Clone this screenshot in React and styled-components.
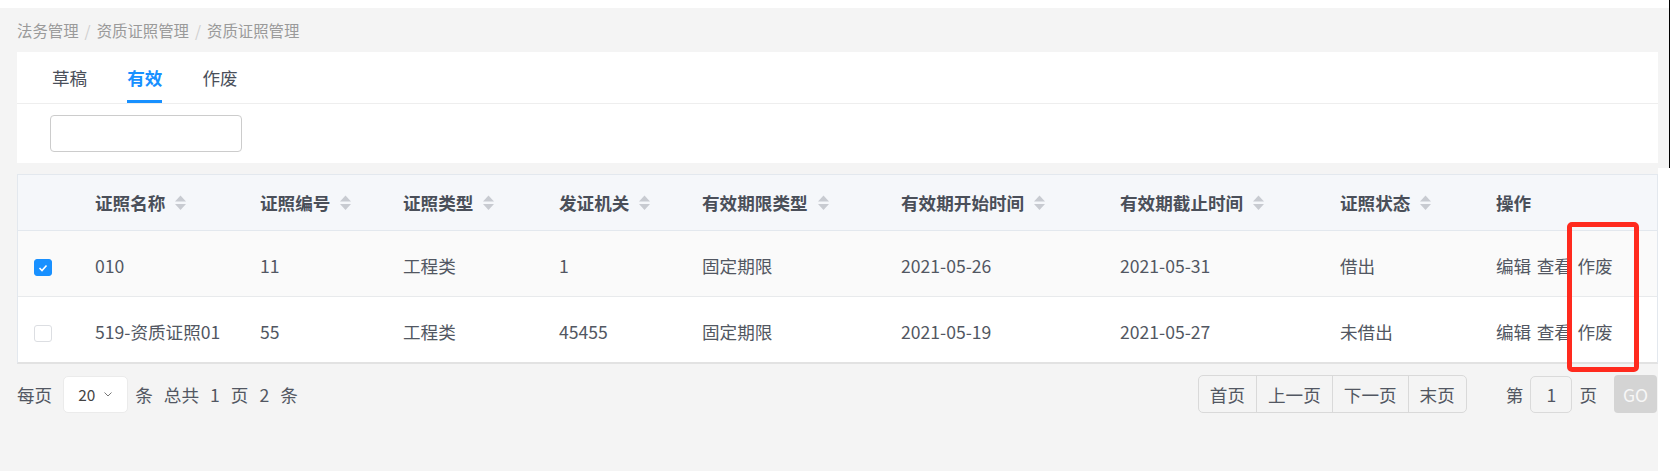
import React from "react";
import styled, { createGlobalStyle } from "styled-components";

const GlobalStyle = createGlobalStyle`
  html, body {
    margin: 0;
    padding: 0;
  }
  body {
    background: #f4f4f4;
    font-family: "Noto Sans CJK SC", "Noto Sans", sans-serif;
    color: #515a6e;
  }
  * {
    box-sizing: border-box;
  }
`;

const Shell = styled.div`
  position: relative;
  display: flex;
  width: 1670px;
  height: 471px;
  overflow: hidden;
`;

const Main = styled.div`
  width: 1658px;
  display: flex;
  flex-direction: column;
  background: #f4f4f4;
`;

const Edge = styled.div`
  flex: 1;
  display: flex;
  flex-direction: column;
`;

const EdgePart = styled.div`
  height: ${(p) => (p.h ? p.h + "px" : "auto")};
  flex: ${(p) => (p.h ? "none" : 1)};
  background: ${(p) => p.bg};
  border-right: ${(p) => (p.line ? "1px solid #000" : "none")};
`;

const TopStrip = styled.div`
  height: 8px;
  background: #fff;
`;

const Breadcrumb = styled.div`
  height: 44px;
  display: flex;
  align-items: center;
  padding-left: 17px;
  font-size: 15.4px;
  color: #9a9a9a;
`;

const Sep = styled.span`
  margin: 0 6px;
  color: #cfcfcf;
`;

const Panel = styled.div`
  margin-left: 17px;
  background: #fff;
`;

const TabBar = styled.div`
  height: 52px;
  display: flex;
  gap: 40px;
  padding-left: 35px;
  border-bottom: 1px solid #eeeeee;
`;

const Tab = styled.div`
  display: flex;
  align-items: center;
  padding-top: 3px;
  font-size: 17.6px;
  color: ${(p) => (p.active ? "#1890ff" : "#4a4f5a")};
  font-weight: ${(p) => (p.active ? 700 : 400)};
  border-bottom: 3px solid ${(p) => (p.active ? "#1890ff" : "transparent")};
`;

const SearchRow = styled.div`
  padding: 11px 33px;
`;

const SearchInput = styled.input`
  display: block;
  width: 192px;
  height: 37px;
  border: 1px solid #cccccc;
  border-radius: 4px;
  outline: none;
  background: #fff;
`;

const Table = styled.div`
  margin: 11px 0 0 17px;
  width: 1641px;
  border: 1px solid #e3e8ee;
  border-bottom: 2px solid #e2e2e2;
  border-right: 1px solid #e3e8ee;
`;

const cols = "77px 165px 143px 156px 143px 199px 219px 220px 156px 1fr";

const HeadRow = styled.div`
  display: grid;
  grid-template-columns: ${cols};
  height: 56px;
  background: #f5f7fa;
  border-bottom: 1px solid #e3e8ee;
`;

const BodyRow = styled.div`
  display: grid;
  grid-template-columns: ${cols};
  height: ${(p) => (p.last ? "65px" : "66px")};
  background: ${(p) => (p.shaded ? "#fafafa" : "#fff")};
  border-bottom: ${(p) => (p.last ? "none" : "1px solid #e8eaec")};
`;

const HeadCell = styled.div`
  display: flex;
  align-items: center;
  gap: 10px;
  font-size: 17.6px;
  font-weight: 700;
  color: #4a4f59;
  white-space: nowrap;
`;

const Cell = styled.div`
  display: flex;
  align-items: center;
  padding-left: ${(p) => (p.check ? "16px" : "0")};
  padding-top: ${(p) => (p.check ? "8px" : "3px")};
  font-size: 17.6px;
  color: #525762;
  white-space: nowrap;
`;

const Actions = styled.div`
  display: flex;
  gap: 5.5px;
`;

const Box = styled.span`
  width: 18px;
  height: 17px;
  border-radius: 3px;
  display: flex;
  align-items: center;
  justify-content: center;
  background: ${(p) => (p.checked ? "#1890ff" : "#fff")};
  border: 1px solid ${(p) => (p.checked ? "#1890ff" : "#dcdee2")};
`;

const Footer = styled.div`
  margin: 11px 1px 0 17px;
  height: 38px;
  display: flex;
  align-items: center;
  justify-content: space-between;
  font-size: 17.6px;
  color: #525762;
`;

const FooterSide = styled.div`
  display: flex;
  align-items: center;
  gap: ${(p) => p.gap}px;
`;

const SizeSelect = styled.div`
  width: 65px;
  height: 37px;
  margin: 0 -4px 0 0;
  padding-left: 14px;
  display: flex;
  align-items: center;
  gap: 9px;
  background: #fff;
  border: 1px solid #ebebeb;
  border-radius: 5px;
  font-size: 15.4px;
  color: #444;
`;

const PagerGroup = styled.div`
  display: flex;
  height: 38px;
  margin-right: 32px;
  border: 1px solid #d9d9d9;
  border-radius: 5px;
`;

const PagerButton = styled.div`
  display: flex;
  align-items: center;
  padding: 0 11px;
  border-left: ${(p) => (p.first ? "none" : "1px solid #d9d9d9")};
  color: #525762;
`;

const PageInput = styled.div`
  width: 42px;
  height: 37px;
  display: flex;
  align-items: center;
  justify-content: center;
  border: 1px solid #dadada;
  border-radius: 5px;
`;

const GoButton = styled.div`
  width: 43px;
  height: 38px;
  margin-left: 10px;
  display: flex;
  align-items: center;
  justify-content: center;
  background: #d4d4d4;
  border-radius: 4px;
  color: #f7f7f7;
  font-size: 17.6px;
`;

const Mark = styled.div`
  position: absolute;
  left: 1567px;
  top: 222px;
  width: 72px;
  height: 150px;
  border: 5px solid #ff2a1e;
  border-radius: 5px;
  pointer-events: none;
`;

function SortIcon() {
  return (
    <svg width="11" height="16" viewBox="0 0 11 16">
      <polygon points="5.5,0.5 11,6.5 0,6.5" fill="#c8cbd1" />
      <polygon points="0,9 11,9 5.5,15" fill="#c8cbd1" />
    </svg>
  );
}

function Checkbox({ checked }) {
  return (
    <Box checked={checked}>
      {checked && (
        <svg width="10" height="8" viewBox="0 0 10 8">
          <polyline points="1.5,4 4,6.5 8.5,1.5" fill="none" stroke="#fff" strokeWidth="1.6" />
        </svg>
      )}
    </Box>
  );
}

const headers = [
  { label: "证照名称", sort: true },
  { label: "证照编号", sort: true },
  { label: "证照类型", sort: true },
  { label: "发证机关", sort: true },
  { label: "有效期限类型", sort: true },
  { label: "有效期开始时间", sort: true },
  { label: "有效期截止时间", sort: true },
  { label: "证照状态", sort: true },
  { label: "操作", sort: false },
];

const rows = [
  { checked: true, cells: ["010", "11", "工程类", "1", "固定期限", "2021-05-26", "2021-05-31", "借出"] },
  { checked: false, cells: ["519-资质证照01", "55", "工程类", "45455", "固定期限", "2021-05-19", "2021-05-27", "未借出"] },
];

export default function App() {
  return (
    <Shell>
      <GlobalStyle />
      <Main>
        <TopStrip />
        <Breadcrumb>
          <span>法务管理</span>
          <Sep>/</Sep>
          <span>资质证照管理</span>
          <Sep>/</Sep>
          <span>资质证照管理</span>
        </Breadcrumb>
        <Panel>
          <TabBar>
            <Tab>草稿</Tab>
            <Tab active>有效</Tab>
            <Tab>作废</Tab>
          </TabBar>
          <SearchRow>
            <SearchInput type="text" />
          </SearchRow>
        </Panel>
        <Table>
          <HeadRow>
            <HeadCell />
            {headers.map((h) => (
              <HeadCell key={h.label}>
                {h.label}
                {h.sort && <SortIcon />}
              </HeadCell>
            ))}
          </HeadRow>
          {rows.map((r, i) => (
            <BodyRow key={i} shaded={i === 0} last={i === rows.length - 1}>
              <Cell check>
                <Checkbox checked={r.checked} />
              </Cell>
              {r.cells.map((c, j) => (
                <Cell key={j}>{c}</Cell>
              ))}
              <Cell>
                <Actions>
                  <span>编辑</span>
                  <span>查看</span>
                  <span>作废</span>
                </Actions>
              </Cell>
            </BodyRow>
          ))}
        </Table>
        <Footer>
          <FooterSide gap={11}>
            <span>每页</span>
            <SizeSelect>
              20
              <svg width="8" height="5" viewBox="0 0 8 5">
                <polyline points="0.5,0.5 4,4 7.5,0.5" fill="none" stroke="#777" strokeWidth="1" />
              </svg>
            </SizeSelect>
            <span>条</span>
            <span>总共</span>
            <span>1</span>
            <span>页</span>
            <span>2</span>
            <span>条</span>
          </FooterSide>
          <FooterSide gap={7}>
            <PagerGroup>
              <PagerButton first>首页</PagerButton>
              <PagerButton>上一页</PagerButton>
              <PagerButton>下一页</PagerButton>
              <PagerButton>末页</PagerButton>
            </PagerGroup>
            <span>第</span>
            <PageInput>1</PageInput>
            <span>页</span>
            <GoButton>GO</GoButton>
          </FooterSide>
        </Footer>
      </Main>
      <Edge>
        <EdgePart h={8} bg="#fff" line />
        <EdgePart h={160} bg="#f4f4f4" line />
        <EdgePart bg="#fff" />
      </Edge>
      <Mark />
    </Shell>
  );
}
